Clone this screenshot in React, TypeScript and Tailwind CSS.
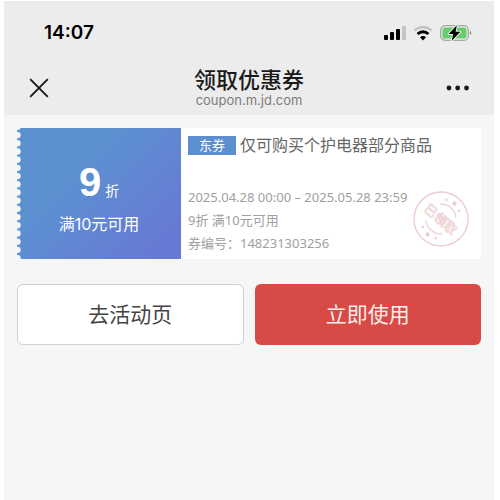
import React from 'react';

const SignalIcon: React.FC = () => (
    <svg width="22" height="16" viewBox="0 0 22 16" aria-hidden="true">
        <rect x="0" y="10" width="4" height="5" rx="1" fill="#000" />
        <rect x="6" y="7" width="4" height="8" rx="1" fill="#000" />
        <rect x="12" y="4" width="4" height="11" rx="1" fill="#000" />
        <rect x="18" y="1" width="4" height="14" rx="1" fill="#c4c4c4" />
    </svg>
);

const WifiIcon: React.FC = () => (
    <svg width="20" height="16" viewBox="0 0 20 16" fill="none" aria-hidden="true">
        <path d="M1.5 5.6C6.2 0.9 13.8 0.9 18.5 5.6" stroke="#c4c4c4" strokeWidth="2.6" />
        <path d="M4.6 9C7.7 6 12.3 6 15.4 9" stroke="#000" strokeWidth="2.8" />
        <path d="M10 15.4L7 12.2C8.7 10.7 11.3 10.7 13 12.2Z" fill="#000" />
    </svg>
);

const BatteryIcon: React.FC = () => (
    <svg width="32" height="18" viewBox="0 0 32 18" aria-hidden="true">
        <rect x="0.7" y="1.7" width="27.6" height="14.6" rx="4.4" fill="none" stroke="#a3aaa3" strokeWidth="1.3" />
        <path d="M29.8 7V11C31.8 10.4 31.8 7.6 29.8 7Z" fill="#8b938b" />
        <rect x="2.5" y="3.5" width="24" height="11" rx="2.6" fill="#67cc6b" />
        <path
            d="M16.8 1.2L8.6 10H13.2L11.8 16.8L20.4 7.8H15.6Z"
            fill="#000"
            stroke="#ececec"
            strokeWidth="2"
            strokeLinejoin="round"
            paintOrder="stroke"
        />
    </svg>
);

const CloseIcon: React.FC = () => (
    <svg width="20" height="20" viewBox="0 0 20 20" aria-hidden="true">
        <path d="M1.2 1.2L18.8 18.8M18.8 1.2L1.2 18.8" stroke="#1a1a1a" strokeWidth="1.9" />
    </svg>
);

const MoreIcon: React.FC = () => (
    <svg width="23" height="6" viewBox="0 0 23 6" fill="#1a1a1a" aria-hidden="true">
        <circle cx="3" cy="3" r="2.4" />
        <circle cx="11.7" cy="3" r="2.4" />
        <circle cx="20.5" cy="3" r="2.4" />
    </svg>
);

// perforated edge of the coupon
const Perforation: React.FC = () => (
    <svg className="absolute inset-y-0 left-0 h-full w-1" aria-hidden="true">
        <defs>
            <pattern id="teeth" width="4" height="8.2" y="3" patternUnits="userSpaceOnUse">
                <circle cx="0.6" cy="4.1" r="3.1" fill="#f6f9fc" />
            </pattern>
        </defs>
        <rect width="100%" height="100%" fill="url(#teeth)" />
    </svg>
);

const ReceivedStamp: React.FC = () => (
    <svg width="56" height="56" viewBox="0 0 56 56" fill="none" role="img" aria-label="已领取">
        <circle cx="28" cy="28" r="27" stroke="#edcdcf" strokeWidth="1.4" />
        <g transform="rotate(41 28 28)">
            <path d="M17.5 17.3A15 15 0 0 1 38.5 17.3" stroke="#efd2d4" strokeWidth="1.3" />
            <path d="M17.5 38.7A15 15 0 0 0 38.5 38.7" stroke="#efd2d4" strokeWidth="1.3" />
            <g fill="#edced0">
                <circle cx="28" cy="7.5" r="2.1" />
                <circle cx="19.5" cy="10" r="1.3" />
                <circle cx="36.5" cy="10" r="1.3" />
                <circle cx="28" cy="48.5" r="2.1" />
                <circle cx="19.5" cy="46" r="1.3" />
                <circle cx="36.5" cy="46" r="1.3" />
            </g>
            <text
                x="28"
                y="33"
                textAnchor="middle"
                fontSize="13"
                fontWeight="500"
                fill="#fdf6f6"
                stroke="#eccacc"
                strokeWidth="0.6"
            >
                已领取
            </text>
        </g>
    </svg>
);

const StatusBar: React.FC = () => (
    <div className="flex items-center justify-between pt-5 pr-[22px] pl-10">
        <span className="text-[19px] leading-6 font-semibold text-black">14:07</span>
        <div className="flex items-center gap-[7px]">
            <SignalIcon />
            <WifiIcon />
            <BatteryIcon />
        </div>
    </div>
);

const NavBar: React.FC = () => (
    <div className="grid grid-cols-[1fr_auto_1fr] items-center px-[25px] pt-[23px] pb-[7px]">
        <button type="button" aria-label="关闭" className="justify-self-start">
            <CloseIcon />
        </button>
        <div className="text-center">
            <h1 className="text-[22px] leading-6 font-medium text-[#1a1a1a]">领取优惠券</h1>
            <p className="text-[13px] leading-4 text-[#7c7c7c]">coupon.m.jd.com</p>
        </div>
        <button type="button" aria-label="更多" className="justify-self-end">
            <MoreIcon />
        </button>
    </div>
);

const Coupon: React.FC = () => (
    <section className="flex h-[131px] bg-white">
        <div className="relative flex w-41 shrink-0 flex-col items-center justify-center bg-linear-135 from-[#5c90d1] from-35% to-[#6779d3] to-90% pt-2 text-white">
            <Perforation />
            <p className="flex items-baseline gap-1">
                <span className="font-['Liberation_Sans',sans-serif] text-[40px] leading-11 font-bold">9</span>
                <span className="text-[14px]">折</span>
            </p>
            <p className="mt-2 text-[16px] leading-6">满10元可用</p>
        </div>
        <div className="relative flex flex-1 flex-col justify-between px-[7px] pt-[5px] pb-1">
            <h2 className="flex items-center gap-1 text-[16px] leading-6 whitespace-nowrap text-[#666]">
                <span className="bg-[#5b8fd0] px-[11px] text-[13px] leading-[19px] text-white">东券</span>
                仅可购买个护电器部分商品
            </h2>
            <div className="font-['Noto_Sans','Noto_Sans_CJK_SC',sans-serif] text-[13px] leading-[23px] whitespace-nowrap text-[#a0a0a0]">
                <p>2025.04.28 00:00 – 2025.05.28 23:59</p>
                <p>9折 满10元可用</p>
                <p>券编号：148231303256</p>
            </div>
            <div className="absolute right-3 bottom-3">
                <ReceivedStamp />
            </div>
        </div>
    </section>
);

const App: React.FC = () => {
    return (
        <div className="min-h-screen bg-white pt-px pr-[6px] pl-1 font-[Inter,'Noto_Sans_CJK_SC',sans-serif]">
            <div className="flex min-h-[calc(100vh-1px)] flex-col bg-[#f6f6f6]">
                <header className="bg-[#ececec]">
                    <StatusBar />
                    <NavBar />
                </header>
                <main className="px-[13px] pt-[13px]">
                    <Coupon />
                    <div className="mt-[25px] grid grid-cols-2 gap-[11px]">
                        <button
                            type="button"
                            className="h-[61px] rounded-md border border-[#d0d0d0] bg-white text-[21px] text-[#444]"
                        >
                            去活动页
                        </button>
                        <button
                            type="button"
                            className="h-[61px] rounded-md bg-[#d74a45] text-[21px] text-[#fdeeed]"
                        >
                            立即使用
                        </button>
                    </div>
                </main>
            </div>
        </div>
    );
};

export default App;
